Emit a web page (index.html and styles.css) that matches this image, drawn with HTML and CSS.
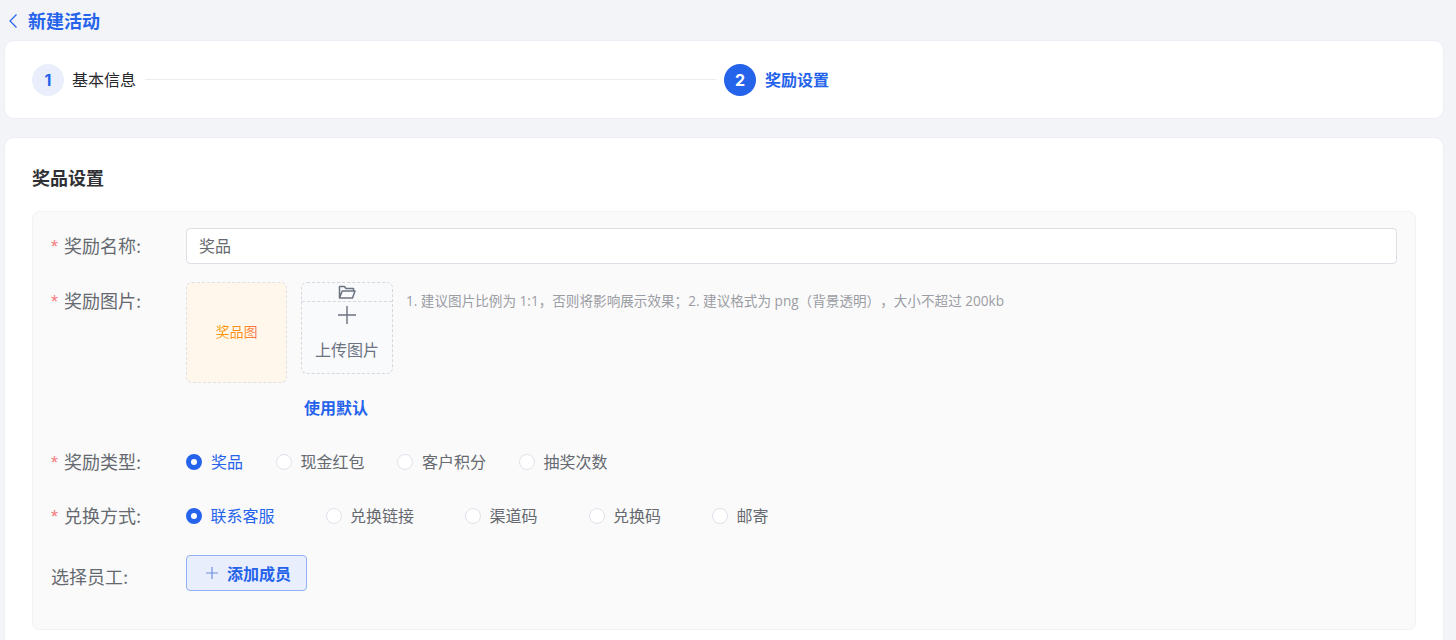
FILE: index.html
```html
<!DOCTYPE html>
<html lang="zh-CN">
<head>
    <meta charset="UTF-8">
    <meta name="viewport" content="width=device-width, initial-scale=1.0">
    <title>新建活动</title>
    <link rel="stylesheet" href="styles.css">
</head>
<body>

<div class="page-head">
    <svg class="back-icon" width="10" height="16" viewBox="0 0 10 16"><path d="M8.5 1.5 2 8l6.5 6.5" fill="none" stroke="currentColor" stroke-width="1.2"/></svg>
    <span class="page-title">新建活动</span>
</div>

<div class="card steps">
    <div class="step">
        <span class="step-num">1</span>
        <span class="step-text">基本信息</span>
        <span class="step-line"></span>
    </div>
    <div class="step step-active">
        <span class="step-num">2</span>
        <span class="step-text">奖励设置</span>
    </div>
</div>

<div class="card prize-card">
    <h2 class="section-title">奖品设置</h2>
    <div class="panel">
        <div class="row row-name">
            <label class="row-label"><i>*</i>奖励名称:</label>
            <input class="text-input" type="text" value="奖品">
        </div>

        <div class="row row-image">
            <label class="row-label"><i>*</i>奖励图片:</label>
            <div class="image-col">
                <div class="image-line">
                    <div class="prize-pic"><span>奖品图</span></div>
                    <div class="upload">
                        <div class="upload-top">
                            <svg width="20" height="16" viewBox="0 0 20 16"><path d="M2.5 14V2.5h5l1.5 2h7.5V7M2.5 14h13l2.5-7H5.2L2.5 14Z" fill="none" stroke="currentColor" stroke-width="1.5" stroke-linejoin="round"/></svg>
                        </div>
                        <svg class="upload-plus" width="20" height="20" viewBox="0 0 20 20"><path d="M10 1v18M1 10h18" stroke="currentColor" stroke-width="1.4"/></svg>
                        <span class="upload-text">上传图片</span>
                    </div>
                    <p class="hint">1. 建议图片比例为 1:1，否则将影响展示效果；2. 建议格式为 png（背景透明），大小不超过 200kb</p>
                </div>
                <a class="use-default">使用默认</a>
            </div>
        </div>

        <div class="row">
            <label class="row-label"><i>*</i>奖励类型:</label>
            <div class="radios radios-type">
                <span class="radio checked"><b></b>奖品</span>
                <span class="radio"><b></b>现金红包</span>
                <span class="radio"><b></b>客户积分</span>
                <span class="radio"><b></b>抽奖次数</span>
            </div>
        </div>

        <div class="row">
            <label class="row-label"><i>*</i>兑换方式:</label>
            <div class="radios radios-way">
                <span class="radio checked"><b></b>联系客服</span>
                <span class="radio"><b></b>兑换链接</span>
                <span class="radio"><b></b>渠道码</span>
                <span class="radio"><b></b>兑换码</span>
                <span class="radio"><b></b>邮寄</span>
            </div>
        </div>

        <div class="row row-staff">
            <label class="row-label plain">选择员工:</label>
            <button class="add-btn">
                <svg width="14" height="14" viewBox="0 0 14 14"><path d="M7 1v12M1 7h12" stroke="currentColor" stroke-width="1.2"/></svg>
                添加成员
            </button>
        </div>
    </div>
</div>

</body>
</html>
```

FILE: styles.css
```css
html, body {
    height: 640px;
    overflow: hidden;
}
body {
    margin: 0;
    padding: 0 12px 0 4px;
    background-color: #f2f4f8;
    font-family: Inter, "Noto Sans CJK SC", sans-serif;
    font-size: 16px;
    color: #666a70;
}
.page-head {
    height: 40px;
    display: flex;
    align-items: center;
    color: #2563eb;
    padding-left: 4px;
}
.back-icon {
    margin: 2px 10px 0 0;
}
.page-title {
    font-size: 18px;
    font-weight: 700;
    margin-bottom: 1px;
}
.card {
    background-color: #fff;
    border: 1px solid #eceff5;
    border-radius: 10px;
    box-sizing: border-box;
}
.steps {
    height: 79px;
    padding: 1px 27px 0;
    display: grid;
    grid-template-columns: 1fr 1fr;
    align-items: center;
}
.step {
    display: flex;
    align-items: center;
}
.step-num {
    width: 32px;
    height: 32px;
    border-radius: 50%;
    background-color: #e8eefc;
    color: #2563eb;
    font-weight: 700;
    display: flex;
    align-items: center;
    justify-content: center;
    margin-right: 8px;
}
.step-text {
    color: #26282c;
    margin-bottom: 2px;
}
.step-line {
    flex: 1;
    height: 1px;
    background-color: #e9ecf1;
    margin: 0 8px 1px 9px;
}
.step-active .step-num {
    background-color: #2563eb;
    color: #fff;
    margin-right: 9px;
}
.step-active .step-text {
    color: #2563eb;
    font-weight: 700;
}
.prize-card {
    margin-top: 18px;
    padding: 0 27px 40px;
}
.section-title {
    margin: 0;
    height: 73px;
    display: flex;
    align-items: center;
    padding-top: 5px;
    box-sizing: border-box;
    font-size: 18px;
    font-weight: 700;
    color: #2f3135;
}
.panel {
    background-color: #fafafb;
    border: 1px solid #f2f3f6;
    border-radius: 8px;
    padding: 16px 18px 38px;
}
.row {
    display: flex;
    align-items: center;
    min-height: 36px;
    margin-bottom: 18px;
}
.row-image {
    align-items: flex-start;
    margin-bottom: 24px;
}
.row-staff {
    margin: 21px 0 0;
}
.row-label {
    width: 135px;
    flex: none;
    font-size: 18px;
    line-height: 26px;
    margin-top: 2px;
}
.row-label i {
    display: inline-block;
    width: 13px;
    color: #f77b7b;
    font-family: "Liberation Sans", sans-serif;
    font-style: normal;
    font-size: 18px;
}
.row-image .row-label {
    margin-top: 7px;
}
.row-staff .row-label {
    margin-top: 10px;
}
.text-input {
    flex: 1;
    height: 36px;
    box-sizing: border-box;
    padding: 0 12px 2px;
    border: 1px solid #dcdfe6;
    border-radius: 4px;
    background-color: #fff;
    font: inherit;
    color: #666a70;
}
.image-col {
    flex: 1;
}
.image-line {
    display: flex;
    align-items: flex-start;
}
.prize-pic {
    width: 101px;
    height: 101px;
    box-sizing: border-box;
    padding-bottom: 3px;
    border: 1px dashed #dfe1e6;
    border-radius: 6px;
    background-color: #fff6ec;
    display: flex;
    align-items: center;
    justify-content: center;
    font-size: 14px;
    margin-right: 14px;
}
.prize-pic span {
    background: linear-gradient(90deg, #ff9a00, #ff8a1f 70%, #f7705f);
    -webkit-background-clip: text;
    background-clip: text;
    color: transparent;
}
.upload {
    width: 92px;
    height: 92px;
    box-sizing: border-box;
    border: 1px dashed #d5d7dc;
    border-radius: 6px;
    background-color: #f9fafc;
    display: flex;
    flex-direction: column;
    align-items: center;
    margin-right: 13px;
    color: #6b7280;
}
.upload-top {
    width: 100%;
    height: 19px;
    padding-top: 1px;
    box-sizing: border-box;
    border-bottom: 1px dashed #d5d7dc;
    display: flex;
    justify-content: center;
}
.upload-plus {
    margin-top: 3px;
}
.upload-text {
    margin-top: 13px;
    line-height: 24px;
}
.hint {
    margin: 9px 0 0;
    font-family: "Open Sans", "Noto Sans CJK SC", sans-serif;
    font-size: 13.6px;
    line-height: 20px;
    color: #9a9da3;
    text-spacing-trim: space-all;
}
.use-default {
    display: block;
    width: 64px;
    margin: 13px 0 0 118px;
    line-height: 24px;
    white-space: nowrap;
    font-weight: 700;
    color: #2563eb;
}
.radios {
    display: flex;
}
.radios-type {
    gap: 32.5px;
}
.radios-way {
    gap: 51px;
}
.radio {
    display: flex;
    align-items: center;
    line-height: 24px;
}
.radio b {
    width: 16px;
    height: 16px;
    box-sizing: border-box;
    border: 1px solid #dfe2ea;
    border-radius: 50%;
    background-color: #fff;
    margin: -1px 8.5px 0 0;
}
.radios-type .radio b {
    margin-right: 9px;
}
.radio.checked {
    color: #2563eb;
}
.radio.checked b {
    border: 5.5px solid #2563eb;
}
.add-btn {
    width: 121px;
    height: 36px;
    border: 1px solid #8fb0f5;
    border-radius: 4px;
    background-color: #e8eefc;
    color: #2563eb;
    font: inherit;
    font-weight: 700;
    display: flex;
    align-items: center;
    gap: 8px;
    padding: 0 0 1px 18px;
    align-self: flex-start;
}
.add-btn svg {
    color: #6f90e0;
}
```
